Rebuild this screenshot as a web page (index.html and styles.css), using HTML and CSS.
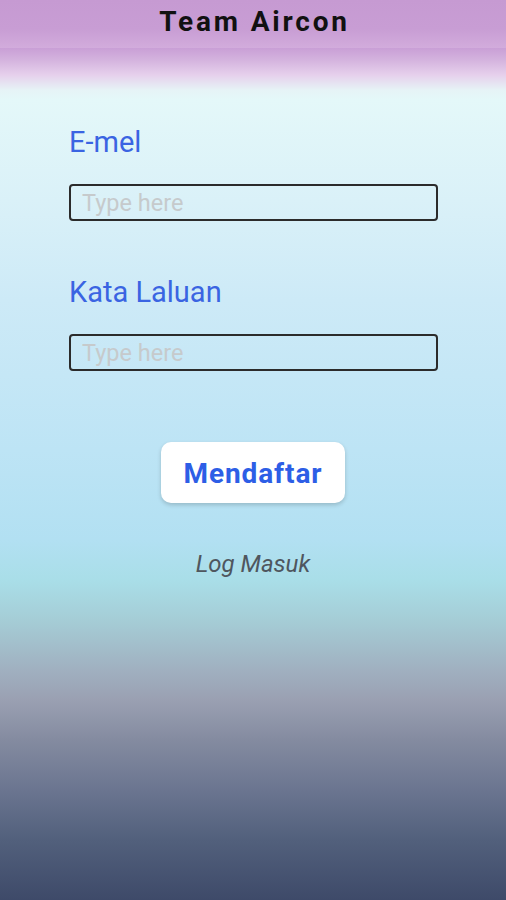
FILE: index.html
```html
<!DOCTYPE html>
<html lang="ms">
<head>
<meta charset="utf-8">
<title>Team Aircon</title>
<link rel="stylesheet" href="styles.css">
</head>
<body>
<div class="screen">
  <header class="topbar">
    <h1 class="title">Team Aircon</h1>
  </header>
  <main class="content">
    <form class="form">
      <label class="label" for="email">E-mel</label>
      <input class="field" id="email" type="text" placeholder="Type here">
      <label class="label label-second" for="pass">Kata Laluan</label>
      <input class="field" id="pass" type="password" placeholder="Type here">
      <div class="actions">
        <button class="btn" type="button">Mendaftar</button>
        <a class="link">Log Masuk</a>
      </div>
    </form>
  </main>
</div>
</body>
</html>
```

FILE: styles.css
```css
* { box-sizing: border-box; }
html, body { margin: 0; padding: 0; }
body {
  font-family: Roboto, "Liberation Sans", sans-serif;
  background: #3e4a69;
}
.screen {
  width: 506px;
  height: 900px;
  display: flex;
  flex-direction: column;
  overflow: hidden;
}
.topbar {
  height: 48px;
  flex: 0 0 48px;
  background: linear-gradient(#c69ad2 0%, #c89dd4 60%, #d2acdc 100%);
  display: flex;
  justify-content: center;
  align-items: center;
}
.title {
  margin: 0;
  font-size: 28px;
  font-weight: 700;
  letter-spacing: 2.8px;
  color: #111;
  line-height: 1;
  padding-bottom: 4px;
  padding-left: 3px;
}
.content {
  flex: 1;
  background: linear-gradient(to bottom,
    #c99fd6 0px,
    #d4b3de 12px,
    #e6d0ec 27px,
    #e6f3f6 42px,
    #e4f8f9 52px,
    #daf1f8 152px,
    #cdeaf7 252px,
    #bde4f5 402px,
    #b2e0f2 492px,
    #a9dee8 532px,
    #a5cdd6 572px,
    #a0b0c0 622px,
    #9aa0b2 652px,
    #848ba0 692px,
    #6b7590 742px,
    #52607c 792px,
    #3e4a69 852px);
}
.form {
  display: flex;
  flex-direction: column;
  padding: 78px 68px 0 69px;
}
.label {
  font-size: 29px;
  line-height: 32px;
  color: #3a64e2;
  margin-bottom: 26px;
}
.label-second {
  margin-top: 55px;
}
.field {
  width: 369px;
  height: 37px;
  border: 2px solid #2b2b2b;
  border-radius: 4px;
  background: transparent;
  font-family: Roboto, "Liberation Sans", sans-serif;
  font-size: 23.5px;
  padding: 0 11px;
  color: #333;
  outline: none;
}
.field::placeholder {
  color: #c6cacc;
}
.actions {
  display: flex;
  flex-direction: column;
  align-items: center;
  margin-top: 71px;
  margin-left: -69px;
  margin-right: -68px;
}
.btn {
  width: 184px;
  height: 61px;
  border: none;
  border-radius: 10px;
  background: #fff;
  box-shadow: 0 2px 4px rgba(0, 0, 0, 0.18);
  font-family: Roboto, "Liberation Sans", sans-serif;
  font-weight: 700;
  font-size: 28px;
  letter-spacing: 0.9px;
  color: #2d5ee6;
  padding: 2px 0 0;
}
.link {
  margin-top: 48px;
  font-size: 24px;
  font-style: italic;
  color: #4f565e;
  line-height: 26px;
}
```
